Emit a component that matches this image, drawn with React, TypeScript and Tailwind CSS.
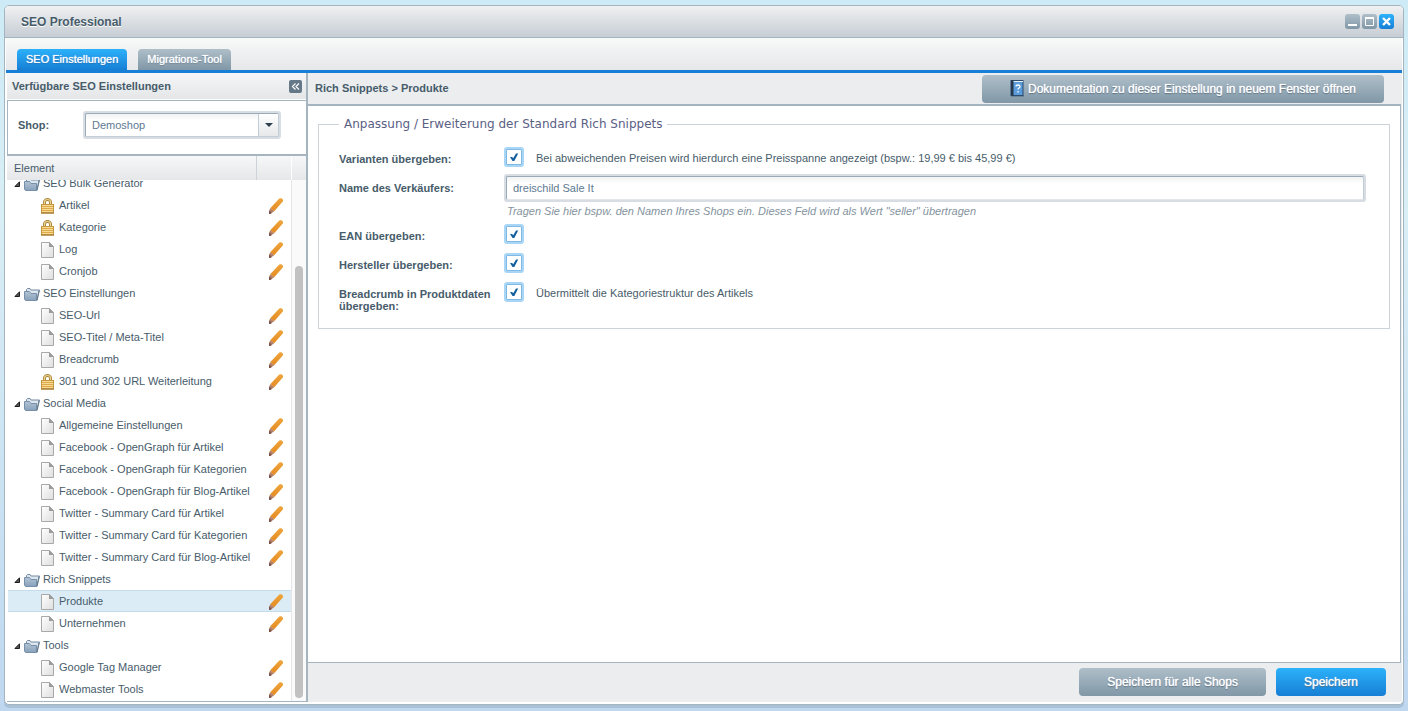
import clsx from "clsx";
import { useState } from "react";
import type { ReactNode } from "react";

type TreeNode = {
  label: string;
  icon?: "lock" | "page";
  children?: TreeNode[];
};

const tree: TreeNode[] = [
  {
    label: "SEO Bulk Generator",
    children: [
      { label: "Artikel", icon: "lock" },
      { label: "Kategorie", icon: "lock" },
      { label: "Log" },
      { label: "Cronjob" },
    ],
  },
  {
    label: "SEO Einstellungen",
    children: [
      { label: "SEO-Url" },
      { label: "SEO-Titel / Meta-Titel" },
      { label: "Breadcrumb" },
      { label: "301 und 302 URL Weiterleitung", icon: "lock" },
    ],
  },
  {
    label: "Social Media",
    children: [
      { label: "Allgemeine Einstellungen" },
      { label: "Facebook - OpenGraph für Artikel" },
      { label: "Facebook - OpenGraph für Kategorien" },
      { label: "Facebook - OpenGraph für Blog-Artikel" },
      { label: "Twitter - Summary Card für Artikel" },
      { label: "Twitter - Summary Card für Kategorien" },
      { label: "Twitter - Summary Card für Blog-Artikel" },
    ],
  },
  {
    label: "Rich Snippets",
    children: [{ label: "Produkte" }, { label: "Unternehmen" }],
  },
  {
    label: "Tools",
    children: [{ label: "Google Tag Manager" }, { label: "Webmaster Tools" }],
  },
];

const PageIcon = () => (
  <svg width="13" height="16" viewBox="0 0 13 16" className="mt-[2px] shrink-0">
    <path d="M.5.5h8l4 4v11H.5z" fill="url(#pageFill)" stroke="#a9a9a9" />
    <path d="M8 0l5 5H8z" fill="#9b9b9b" />
  </svg>
);

const LockIcon = () => (
  <svg width="13" height="16" viewBox="0 0 13 16" className="mt-[2px] shrink-0">
    <path d="M3.500 8V4.200a3 2.700 0 0 1 6 0V8" fill="none" stroke="#a8843c" strokeWidth="3" />
    <path d="M3.500 8V4.200a3 2.700 0 0 1 6 0V8" fill="none" stroke="#ecd491" strokeWidth="1.200" />
    <rect x=".5" y="6.500" width="12" height="8.500" fill="#dda94a" stroke="#c3963f" />
    <path d="M1 7.500h11M1 9.500h11M1 11.500h11M1 13.500h11" stroke="#f8dc94" />
    <path d="M0 15h13" stroke="#9c7530" />
  </svg>
);

const FolderIcon = () => (
  <svg width="16" height="13" viewBox="0 0 16 13" className="mt-[2px] shrink-0">
    <path d="M2.500 5V1.500L3.500.5H6l1 1.500h8.500L13 12.500z" fill="#dde6ee" stroke="#7289a0" />
    <path d="M.5 3.500h5l1.500 2h5.500v7H1.500L.5 11z" fill="url(#folderFill)" stroke="#7790a9" />
    <path d="M15 2.500l-2 9.500" stroke="#62798f" />
  </svg>
);

const ArrowIcon = () => (
  <svg width="7" height="7" viewBox="0 0 7 7" className="mt-[2px] shrink-0">
    <path d="M5.500.8v4.700H.9z" fill="#555" stroke="#1d1d1d" />
  </svg>
);

const PencilIcon = () => (
  <svg width="14" height="16" viewBox="0 0 14 16" className="mt-[2px]">
    <path d="M9.800.900Q10.300.2 11 .2h1.500L14 1.700v1.500L5.200 13.300 1.200 10.200z" fill="url(#pencilFill)" />
    <path d="M1.200 10.200l4 3.100L1.200 16H0v-2.800z" fill="#b07f68" />
    <path d="M.3 12.500l2.500 2.400L1.200 16H0v-2.800z" fill="#7b544c" />
  </svg>
);

const BookIcon = () => (
  <svg width="14" height="17" viewBox="0 0 14 17" className="shrink-0">
    <path d="M1 15.500h13v1H1z" fill="#3c5061" opacity=".7" />
    <rect x="1" y=".5" width="12" height="15" fill="#5b9bd9" stroke="#2a4a6e" />
    <path d="M3 1.500h10" stroke="#e9f3fb" />
    <path d="M1 .5h2.500v15H1z" fill="#27384d" />
    <path d="M6 6.500q0-1.500 2-1.500t2 1.500q0 1-1 1.500T8 9.500M8 11v1.500" fill="none" stroke="#fff" strokeWidth="1.300" />
  </svg>
);

const Gradients = () => (
  <svg width="0" height="0" className="absolute" aria-hidden="true">
    <defs>
      <linearGradient id="pageFill" x1="0" y1="0" x2="1" y2="1">
        <stop offset="0" stopColor="#fff" />
        <stop offset="1" stopColor="#dedede" />
      </linearGradient>
      <linearGradient id="folderFill" x1="0" y1="0" x2="0" y2="1">
        <stop offset="0" stopColor="#b3c5d6" />
        <stop offset="1" stopColor="#87a0ba" />
      </linearGradient>
      <linearGradient id="pencilFill" x1="0" y1="0" x2="0" y2="1">
        <stop offset="0" stopColor="#eea63c" />
        <stop offset="1" stopColor="#e58a22" />
      </linearGradient>
    </defs>
  </svg>
);

const grayButton = "bg-linear-to-b from-[#afbfc9] to-[#8097a7]";
const blueButton = "bg-linear-to-b from-[#2cb1fa] to-[#177fd5]";

const ActionButton = ({ className, children }: { className: string; children: ReactNode }) => (
  <button
    type="button"
    className={clsx(
      "flex h-7 items-center gap-1 rounded px-7 text-xs text-white [text-shadow:0_0_1px_#fff,0_1px_1px_#4f6475]",
      className
    )}
  >
    {children}
  </button>
);

const WindowControls = () => (
  <div className="flex gap-[2px]">
    <button type="button" aria-label="Minimieren" className={clsx("size-[15px] rounded-[3px]", grayButton)}>
      <svg viewBox="0 0 15 15">
        <path d="M3 11h9" stroke="#fff" strokeWidth="2" />
      </svg>
    </button>
    <button type="button" aria-label="Maximieren" className={clsx("size-[15px] rounded-[3px]", grayButton)}>
      <svg viewBox="0 0 15 15">
        <path d="M3.500 4v7.500h8V4" fill="none" stroke="#fff" />
        <path d="M3 4h9" stroke="#fff" strokeWidth="2" />
      </svg>
    </button>
    <button type="button" aria-label="Schließen" className={clsx("size-[15px] rounded-[3px]", blueButton)}>
      <svg viewBox="0 0 15 15">
        <path d="M4 4l7 7M11 4l-7 7" stroke="#fff" strokeWidth="2.400" />
      </svg>
    </button>
  </div>
);

const Leaf = ({
  node,
  active,
  onSelect,
}: {
  node: TreeNode;
  active: boolean;
  onSelect: (label: string) => void;
}) => (
  <li
    className={clsx("flex h-[22px] items-center border-y pr-2 pl-[33px]", {
      "border-[#c5dcec] bg-[#dcecf6]": active,
      "border-transparent": !active,
    })}
  >
    <button
      type="button"
      onClick={() => onSelect(node.label)}
      className="flex flex-1 items-center gap-[5px] text-left whitespace-nowrap"
    >
      {node.icon === "lock" ? <LockIcon /> : <PageIcon />}
      <span>{node.label}</span>
    </button>
    <button type="button" aria-label={`${node.label} bearbeiten`}>
      <PencilIcon />
    </button>
  </li>
);

const Sidebar = () => {
  const [selected, setSelected] = useState("Produkte");

  return (
    <aside className="flex w-[301px] shrink-0 flex-col border-r-2 border-[#a4b5c0]">
      <header className="flex h-[27px] shrink-0 items-center justify-between border-b border-white bg-linear-to-b from-[#f5f6f7] to-[#e4e6e8] pr-1 pl-[5px]">
        <h2 className="font-bold">Verfügbare SEO Einstellungen</h2>
        <button type="button" aria-label="Einklappen" className="size-[13px] rounded-xs bg-[#647888]">
          <svg viewBox="0 0 13 13">
            <path d="M6.500 3.500l-3 3 3 3M10 3.500l-3 3 3 3" fill="none" stroke="#fff" strokeWidth="1.200" />
          </svg>
        </button>
      </header>

      <div className="flex shrink-0 items-start border-t border-b-2 border-l border-[#a4b5c0] bg-white pt-[10px] pb-[15px] pl-[10px]">
        <label htmlFor="shop" className="w-[65px] leading-7 font-bold">
          Shop:
        </label>
        <div className="grid h-7 w-[198px] rounded-[3px] bg-[#d7dde2] p-[2px]">
          <select
            id="shop"
            className="col-start-1 row-start-1 appearance-none rounded-xs border border-t-[#9aabb7] border-r-[#c3cdd5] border-b-[#c3cdd5] border-l-[#9aabb7] bg-linear-to-b from-[#f1f2f3] to-white to-30% pl-[6px] text-[#5e7a92]"
          >
            <option>Demoshop</option>
          </select>
          <span className="pointer-events-none col-start-1 row-start-1 my-px mr-px grid w-5 place-items-center justify-self-end border-l border-[#c3cdd5] bg-linear-to-b from-white to-[#e6e8ea]">
            <svg width="8" height="4" viewBox="0 0 8 4">
              <path d="M0 0h8L4 4z" fill="#2f414e" />
            </svg>
          </span>
        </div>
      </div>

      <div className="flex h-6 shrink-0 bg-linear-to-b from-[#f6f7f8] to-[#e5e7e9] pl-[7px] leading-6">
        <span className="flex-1">Element</span>
        <span className="w-[35px] border-l border-[#cdd3d8]" />
        <span className="w-[15px] border-l border-white" />
      </div>

      <div className="flex min-h-0 flex-1 border-b border-[#a4b5c0] bg-white">
        {/* list is scrolled to its end */}
        <ul className="ml-px flex flex-1 flex-col justify-end overflow-hidden">
          {tree.map((group) => (
            <li key={group.label} className="shrink-0 last:pb-px">
              <div className="flex h-[22px] items-center pl-[6px]">
                <ArrowIcon />
                <span className="mr-[3px] ml-[3px]">
                  <FolderIcon />
                </span>
                <span>{group.label}</span>
              </div>
              <ul>
                {group.children?.map((node) => (
                  <Leaf
                    key={node.label}
                    node={node}
                    active={node.label === selected}
                    onSelect={setSelected}
                  />
                ))}
              </ul>
            </li>
          ))}
        </ul>
        <div className="flex w-[15px] flex-col justify-end border-l border-[#e6e6e6] bg-[#fafafa] px-[3px] pb-[3px]">
          <div className="h-5/6 rounded-full bg-[#c1c1c1]" />
        </div>
      </div>
    </aside>
  );
};

const CheckBox = ({ id }: { id: string }) => (
  <span className="grid size-5 shrink-0">
    <input
      id={id}
      type="checkbox"
      defaultChecked
      className="peer col-start-1 row-start-1 m-0 size-5 appearance-none rounded-[3px] border-2 border-[#a9d6f6] bg-white shadow-[inset_0_0_0_1px_#7fb9e4]"
    />
    <svg
      viewBox="0 0 20 20"
      className="pointer-events-none invisible col-start-1 row-start-1 size-5 peer-checked:visible"
    >
      <path d="M6 10h2.200l1 1.300L12 6.500h2.200L10.300 14H8.500z" fill="#13609f" />
    </svg>
  </span>
);

const Row = ({
  id,
  label,
  text,
  className,
}: {
  id: string;
  label: string;
  text?: string;
  className?: string;
}) => (
  <div className={clsx("flex items-start", className)}>
    <label htmlFor={id} className="w-[165px] shrink-0 pt-[6px] pr-2 leading-3 font-bold">
      {label}
    </label>
    <CheckBox id={id} />
    {text && <span className="ml-3 leading-[22px]">{text}</span>}
  </div>
);

const Settings = () => (
  <main className="flex min-w-0 flex-1 flex-col bg-[#ebedef]">
    <header className="flex h-[31px] shrink-0 items-center justify-between pr-[18px] pl-[7px]">
      <h2 className="font-bold">Rich Snippets &gt; Produkte</h2>
      <ActionButton className={grayButton}>
        <BookIcon />
        Dokumentation zu dieser Einstellung in neuem Fenster öffnen
      </ActionButton>
    </header>

    <form className="mr-px flex-1 border-t-2 border-r border-b border-[#a4b5c0] bg-white p-[10px]">
      <fieldset className="border border-[#ccd3d9] pt-[15px] pr-[23px] pb-4 pl-5">
        <legend className="px-[5px] font-['DejaVu_Sans',sans-serif] text-[12px] leading-4 text-[#5a6084]">
          Anpassung / Erweiterung der Standard Rich Snippets
        </legend>
        <Row
          id="variants"
          label="Varianten übergeben:"
          text="Bei abweichenden Preisen wird hierdurch eine Preisspanne angezeigt (bspw.: 19,99 € bis 45,99 €)"
          className="mb-[5px]"
        />
        <div className="mb-1 flex items-start">
          <label htmlFor="seller" className="w-[165px] shrink-0 leading-7 font-bold">
            Name des Verkäufers:
          </label>
          <div className="flex-1">
            <div className="flex h-7 rounded-[3px] bg-[#d7dde2] p-[2px]">
              <input
                id="seller"
                type="text"
                defaultValue="dreischild Sale It"
                className="w-full rounded-xs border border-t-[#9aabb7] border-r-[#c3cdd5] border-b-[#e3e7ea] border-l-[#9aabb7] bg-linear-to-b from-[#f1f2f3] to-white to-30% px-[6px] text-[#5e7a92]"
              />
            </div>
            <p className="pl-[3px] leading-[18px] text-[#84939e] italic">
              Tragen Sie hier bspw. den Namen Ihres Shops ein. Dieses Feld wird als Wert "seller" übertragen
            </p>
          </div>
        </div>
        <Row id="ean" label="EAN übergeben:" className="mb-[9px]" />
        <Row id="manufacturer" label="Hersteller übergeben:" className="mb-[9px]" />
        <Row
          id="breadcrumb"
          label="Breadcrumb in Produktdaten übergeben:"
          text="Übermittelt die Kategoriestruktur des Artikels"
        />
      </fieldset>
    </form>

    <footer className="flex shrink-0 justify-end gap-[10px] pt-[5px] pr-4 pb-[6px]">
      <ActionButton className={grayButton}>Speichern für alle Shops</ActionButton>
      <ActionButton className={blueButton}>Speichern</ActionButton>
    </footer>
  </main>
);

export default function App() {
  return (
    <div className="flex h-screen bg-linear-to-b from-[#cdebf6] via-[#d9eef5] via-30% to-[#bfd8f0] px-1 pt-[5px] pb-[6px] font-['Liberation_Sans',Arial,sans-serif] text-[11px] text-[#475c6a]">
      <Gradients />
      <div className="flex min-w-0 flex-1 flex-col rounded-[5px] border border-[#a4b5c0] bg-white shadow-[0_3px_0_#a9c2d8]">
        <header className="flex h-8 shrink-0 items-center justify-between rounded-t border-b border-[#a4b5c0] bg-linear-to-b from-[#f0f1f2] to-[#c6cdd4] pr-[9px] pl-4">
          <h1 className="text-xs font-bold [text-shadow:0_1px_0_#fff]">SEO Professional</h1>
          <WindowControls />
        </header>

        <nav className="mr-px ml-px flex h-[35px] shrink-0 items-end gap-[11px] border-b-[3px] border-[#177fd5] bg-linear-to-b from-[#f8f9f9] to-[#e5e7e9] pl-[11px] text-white">
          <button
            type="button"
            className={clsx("h-[21px] rounded-t px-[9px] [text-shadow:0_0_1px_#fff,0_1px_1px_#1062ae]", blueButton)}
          >
            SEO Einstellungen
          </button>
          <button
            type="button"
            className={clsx("h-[21px] rounded-t px-[9px] [text-shadow:0_0_1px_#fff,0_1px_1px_#5e7688]", grayButton)}
          >
            Migrations-Tool
          </button>
        </nav>

        <div className="mr-px mb-[2px] ml-[2px] flex min-h-0 flex-1">
          <Sidebar />
          <Settings />
        </div>
      </div>
    </div>
  );
}
